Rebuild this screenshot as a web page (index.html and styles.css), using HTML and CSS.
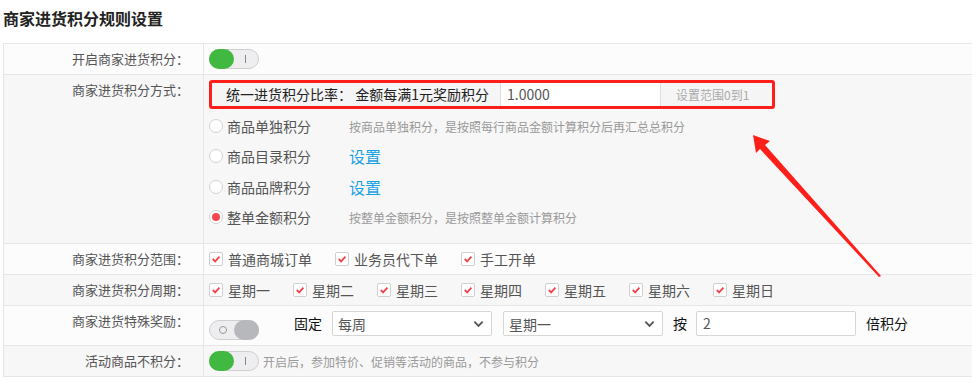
FILE: index.html
```html
<!DOCTYPE html>
<html lang="zh-CN">
<head>
<meta charset="UTF-8" />
<title>商家进货积分规则设置</title>
<link rel="stylesheet" href="styles.css">
</head>
<body>
  <h2 class="title">商家进货积分规则设置</h2>

  <div class="form-table">
    <div class="row row-light">
      <div class="label">开启商家进货积分：</div>
      <div class="field">
        <span class="switch on"><span class="knob"></span><span class="mark"></span></span>
      </div>
    </div>

    <div class="row row-gray row-mode">
      <div class="label">商家进货积分方式：</div>
      <div class="field field-mode">
        <div class="highlight">
          <div class="input-group">
            <span class="addon addon-main">统一进货积分比率：&nbsp;金额每满1元奖励积分</span>
            <span class="input-value">1.0000</span>
            <span class="addon addon-hint">设置范围0到1</span>
          </div>
        </div>
        <ul class="radio-list">
          <li><span class="radio"></span><span class="radio-text">商品单独积分</span><span class="desc">按商品单独积分，是按照每行商品金额计算积分后再汇总总积分</span></li>
          <li><span class="radio"></span><span class="radio-text">商品目录积分</span><a class="link" href="#">设置</a></li>
          <li><span class="radio"></span><span class="radio-text">商品品牌积分</span><a class="link" href="#">设置</a></li>
          <li><span class="radio checked"></span><span class="radio-text">整单金额积分</span><span class="desc">按整单金额积分，是按照整单金额计算积分</span></li>
        </ul>
      </div>
    </div>

    <div class="row row-light">
      <div class="label">商家进货积分范围：</div>
      <div class="field checks">
        <label class="check"><span class="box"><svg viewBox="0 0 13 13"><path d="M3 6.5l2.6 2.6L10.2 4" /></svg></span>普通商城订单</label>
        <label class="check"><span class="box"><svg viewBox="0 0 13 13"><path d="M3 6.5l2.6 2.6L10.2 4" /></svg></span>业务员代下单</label>
        <label class="check"><span class="box"><svg viewBox="0 0 13 13"><path d="M3 6.5l2.6 2.6L10.2 4" /></svg></span>手工开单</label>
      </div>
    </div>

    <div class="row row-gray">
      <div class="label">商家进货积分周期：</div>
      <div class="field checks">
        <label class="check"><span class="box"><svg viewBox="0 0 13 13"><path d="M3 6.5l2.6 2.6L10.2 4" /></svg></span>星期一</label>
        <label class="check"><span class="box"><svg viewBox="0 0 13 13"><path d="M3 6.5l2.6 2.6L10.2 4" /></svg></span>星期二</label>
        <label class="check"><span class="box"><svg viewBox="0 0 13 13"><path d="M3 6.5l2.6 2.6L10.2 4" /></svg></span>星期三</label>
        <label class="check"><span class="box"><svg viewBox="0 0 13 13"><path d="M3 6.5l2.6 2.6L10.2 4" /></svg></span>星期四</label>
        <label class="check"><span class="box"><svg viewBox="0 0 13 13"><path d="M3 6.5l2.6 2.6L10.2 4" /></svg></span>星期五</label>
        <label class="check"><span class="box"><svg viewBox="0 0 13 13"><path d="M3 6.5l2.6 2.6L10.2 4" /></svg></span>星期六</label>
        <label class="check"><span class="box"><svg viewBox="0 0 13 13"><path d="M3 6.5l2.6 2.6L10.2 4" /></svg></span>星期日</label>
      </div>
    </div>

    <div class="row row-light row-special">
      <div class="label">商家进货特殊奖励：</div>
      <div class="field field-special">
        <span class="switch off"><span class="mark-o"></span><span class="knob"></span></span>
        <span class="plain plain-fixed">固定</span>
        <div class="select"><span>每周</span><svg viewBox="0 0 12 8"><path d="M1.5 1.5L6 6l4.5-4.5" /></svg></div>
        <div class="select"><span>星期一</span><svg viewBox="0 0 12 8"><path d="M1.5 1.5L6 6l4.5-4.5" /></svg></div>
        <span class="plain">按</span>
        <div class="text-input">2</div>
        <span class="plain">倍积分</span>
      </div>
    </div>

    <div class="row row-gray">
      <div class="label">活动商品不积分：</div>
      <div class="field">
        <span class="switch on"><span class="knob"></span><span class="mark"></span></span>
        <span class="note">开启后，参加特价、促销等活动的商品，不参与积分</span>
      </div>
    </div>
  </div>

  <svg class="arrow" width="972" height="389" viewBox="0 0 972 389">
    <polygon points="753,135 770,141 765,145 881,276 879,277 760,149 756,153" />
  </svg>
</body>
</html>
```

FILE: styles.css
```css
body {
  margin: 0;
  font-family: "Noto Sans CJK SC", "Liberation Sans", sans-serif;
  color: #555;
  background: #fff;
  overflow: hidden;
  width: 972px;
  height: 389px;
  position: relative;
}
.title {
  margin: 0;
  padding: 8px 3px 15px;
  font-size: 16px;
  line-height: 20px;
  font-weight: bold;
  color: #222;
}
.form-table {
  margin-left: 3px;
  width: 990px;
  border-top: 1px solid #e6e6e6;
  border-left: 1px solid #e6e6e6;
}
.row {
  display: flex;
  border-bottom: 1px solid #e6e6e6;
  min-height: 30px;
}
.row-light {
  background: #fcfcfc;
}
.row-gray {
  background: #f7f7f7;
}
.row-mode {
  height: 168px;
}
.row-special {
  height: 39px;
}
.label {
  width: 185px;
  flex-shrink: 0;
  padding-right: 14px;
  border-right: 1px solid #e6e6e6;
  text-align: right;
  font-size: 13px;
  line-height: 30px;
  color: #555;
}
.field {
  display: flex;
  align-items: center;
  padding-left: 5px;
  font-size: 14px;
}

/* switches */
.switch {
  display: flex;
  align-items: center;
  width: 48px;
  height: 18px;
  border: 1px solid #cfcfcf;
  border-radius: 10px;
  background: #eeeef0;
  flex-shrink: 0;
}
.switch .knob {
  width: 25px;
  height: 20px;
  border-radius: 10px;
  margin: -1px;
}
.switch.on .knob {
  background: #41b940;
}
.switch.on .mark {
  width: 1px;
  height: 8px;
  margin-left: 12px;
  background: #888;
}
.switch.off {
  margin-top: 9px;
}
.switch.off .knob {
  background: #b6b8bc;
  margin-left: auto;
}
.switch.off .mark-o {
  width: 6px;
  height: 6px;
  border: 1px solid #999;
  border-radius: 50%;
  margin-left: 9px;
}

/* mode row */
.field-mode {
  flex-direction: column;
  align-items: flex-start;
  padding-top: 5px;
}
.highlight {
  border: 3px solid #ff1f1a;
  border-radius: 3px;
}
.input-group {
  display: flex;
  width: 560px;
  height: 23px;
  background: #f5f5f5;
}
.addon {
  line-height: 23px;
}
.addon-main {
  width: 274px;
  padding-left: 14px;
  color: #222;
}
.input-value {
  width: 153px;
  padding-left: 6px;
  background: #fff;
  border-left: 1px solid #ddd;
  border-right: 1px solid #ddd;
  line-height: 23px;
  color: #555;
}
.addon-hint {
  padding-left: 15px;
  font-size: 12px;
  color: #aaa;
}
.radio-list {
  list-style: none;
  margin: 2px 0 0;
  padding: 0;
}
.radio-list li {
  display: flex;
  align-items: center;
  height: 30.3px;
}
.radio {
  width: 12px;
  height: 12px;
  border: 1px solid #d3d3d3;
  border-radius: 50%;
  background: #fff;
  display: flex;
  align-items: center;
  justify-content: center;
  flex-shrink: 0;
}
.radio.checked::after {
  content: "";
  width: 8px;
  height: 8px;
  border-radius: 50%;
  background: #f5474d;
}
.radio-text {
  width: 122px;
  margin-left: 4px;
  color: #555;
}
.desc {
  font-size: 12px;
  color: #999;
}
.link {
  font-size: 16px;
  color: #1a9fe3;
  text-decoration: none;
}

/* checkboxes */
.checks {
  gap: 23px;
}
.check {
  display: flex;
  align-items: center;
  gap: 5px;
  color: #555;
}
.box {
  width: 12px;
  height: 12px;
  border: 1px solid #d0d0d0;
  border-radius: 2px;
  background: #fff;
  display: flex;
}
.box svg {
  width: 12px;
  height: 12px;
}
.box path {
  fill: none;
  stroke: #f0444c;
  stroke-width: 2;
}

/* special reward row */
.field-special {
  align-items: flex-start;
  padding-top: 5px;
}
.plain {
  color: #111;
  line-height: 25px;
  margin-left: 10px;
}
.plain-fixed {
  margin-left: 35px;
}
.select {
  display: flex;
  align-items: center;
  justify-content: space-between;
  width: 146px;
  height: 23px;
  padding: 0 7px 0 5px;
  margin-left: 10px;
  border: 1px solid #d6d6d6;
  border-radius: 2px;
  background: #fff;
  color: #555;
}
.select + .select {
  margin-left: 11px;
}
.select svg {
  width: 11px;
  height: 8px;
}
.select path {
  fill: none;
  stroke: #555;
  stroke-width: 2;
}
.text-input {
  width: 152px;
  height: 23px;
  line-height: 23px;
  padding-left: 6px;
  margin-left: 9px;
  border: 1px solid #d6d6d6;
  border-radius: 2px;
  background: #fff;
  color: #555;
}
.note {
  margin-left: 4px;
  font-size: 12px;
  color: #999;
}

/* annotation arrow */
.arrow {
  position: absolute;
  left: 0;
  top: 0;
  pointer-events: none;
}
.arrow polygon {
  fill: #ff1f1a;
}
```
